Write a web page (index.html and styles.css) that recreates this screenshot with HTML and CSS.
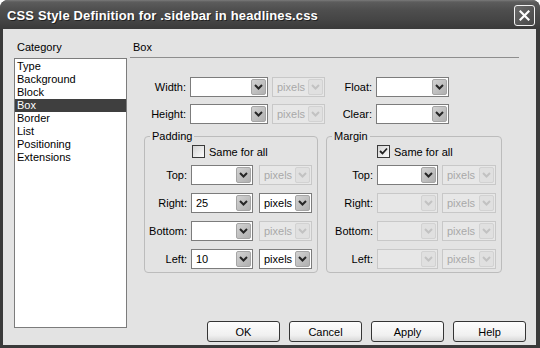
FILE: index.html
```html
<!DOCTYPE html>
<html lang="en">
<head>
    <meta charset="UTF-8">
    <title>CSS Style Definition</title>
    <link rel="stylesheet" href="styles.css">
</head>
<body>
    <div class="window">
        <div class="titlebar">
            <span class="title">CSS Style Definition for .sidebar in headlines.css</span>
            <span class="close">
                <svg width="11" height="11" viewBox="0 0 11 11"><path d="M1.5 1.5 L9.5 9.5 M9.5 1.5 L1.5 9.5" stroke="#fff" stroke-width="2.2" stroke-linecap="square"/></svg>
            </span>
        </div>

        <div class="content">
            <div class="category">
                <div class="caption">Category</div>
                <ul class="list">
                    <li>Type</li>
                    <li>Background</li>
                    <li>Block</li>
                    <li class="selected">Box</li>
                    <li>Border</li>
                    <li>List</li>
                    <li>Positioning</li>
                    <li>Extensions</li>
                </ul>
            </div>

            <div class="panel">
                <div class="heading">Box</div>

                <div class="row first">
                    <span class="lbl lbl-main">Width:</span>
                    <div class="select size"><span class="val"></span><span class="arrow"><svg width="9" height="6" viewBox="0 0 9 6"><path d="M1 1 L4.5 4.5 L8 1" fill="none" stroke-width="2"/></svg></span></div>
                    <div class="select unit disabled"><span class="val">pixels</span><span class="arrow"><svg width="9" height="6" viewBox="0 0 9 6"><path d="M1 1 L4.5 4.5 L8 1" fill="none" stroke-width="2"/></svg></span></div>
                    <span class="lbl lbl-float">Float:</span>
                    <div class="select float"><span class="val"></span><span class="arrow"><svg width="9" height="6" viewBox="0 0 9 6"><path d="M1 1 L4.5 4.5 L8 1" fill="none" stroke-width="2"/></svg></span></div>
                </div>
                <div class="row">
                    <span class="lbl lbl-main">Height:</span>
                    <div class="select size"><span class="val"></span><span class="arrow"><svg width="9" height="6" viewBox="0 0 9 6"><path d="M1 1 L4.5 4.5 L8 1" fill="none" stroke-width="2"/></svg></span></div>
                    <div class="select unit disabled"><span class="val">pixels</span><span class="arrow"><svg width="9" height="6" viewBox="0 0 9 6"><path d="M1 1 L4.5 4.5 L8 1" fill="none" stroke-width="2"/></svg></span></div>
                    <span class="lbl lbl-float">Clear:</span>
                    <div class="select float"><span class="val"></span><span class="arrow"><svg width="9" height="6" viewBox="0 0 9 6"><path d="M1 1 L4.5 4.5 L8 1" fill="none" stroke-width="2"/></svg></span></div>
                </div>

                <div class="groups">
                    <fieldset class="group padding">
                        <legend>Padding</legend>
                        <div class="check-row"><span class="check"></span>Same for all</div>
                        <div class="side">
                            <span class="lbl">Top:</span>
                            <div class="select val-box"><span class="val"></span><span class="arrow"><svg width="9" height="6" viewBox="0 0 9 6"><path d="M1 1 L4.5 4.5 L8 1" fill="none" stroke-width="2"/></svg></span></div>
                            <div class="select unit disabled"><span class="val">pixels</span><span class="arrow"><svg width="9" height="6" viewBox="0 0 9 6"><path d="M1 1 L4.5 4.5 L8 1" fill="none" stroke-width="2"/></svg></span></div>
                        </div>
                        <div class="side">
                            <span class="lbl">Right:</span>
                            <div class="select val-box"><span class="val">25</span><span class="arrow"><svg width="9" height="6" viewBox="0 0 9 6"><path d="M1 1 L4.5 4.5 L8 1" fill="none" stroke-width="2"/></svg></span></div>
                            <div class="select unit"><span class="val">pixels</span><span class="arrow"><svg width="9" height="6" viewBox="0 0 9 6"><path d="M1 1 L4.5 4.5 L8 1" fill="none" stroke-width="2"/></svg></span></div>
                        </div>
                        <div class="side">
                            <span class="lbl">Bottom:</span>
                            <div class="select val-box"><span class="val"></span><span class="arrow"><svg width="9" height="6" viewBox="0 0 9 6"><path d="M1 1 L4.5 4.5 L8 1" fill="none" stroke-width="2"/></svg></span></div>
                            <div class="select unit disabled"><span class="val">pixels</span><span class="arrow"><svg width="9" height="6" viewBox="0 0 9 6"><path d="M1 1 L4.5 4.5 L8 1" fill="none" stroke-width="2"/></svg></span></div>
                        </div>
                        <div class="side">
                            <span class="lbl">Left:</span>
                            <div class="select val-box"><span class="val">10</span><span class="arrow"><svg width="9" height="6" viewBox="0 0 9 6"><path d="M1 1 L4.5 4.5 L8 1" fill="none" stroke-width="2"/></svg></span></div>
                            <div class="select unit"><span class="val">pixels</span><span class="arrow"><svg width="9" height="6" viewBox="0 0 9 6"><path d="M1 1 L4.5 4.5 L8 1" fill="none" stroke-width="2"/></svg></span></div>
                        </div>
                    </fieldset>

                    <fieldset class="group margin">
                        <legend>Margin</legend>
                        <div class="check-row"><span class="check checked"><svg width="11" height="11" viewBox="0 0 11 11"><path d="M2 5 L4.5 7.5 L9 2.5" fill="none" stroke="#222" stroke-width="1.8"/></svg></span>Same for all</div>
                        <div class="side">
                            <span class="lbl">Top:</span>
                            <div class="select val-box"><span class="val"></span><span class="arrow"><svg width="9" height="6" viewBox="0 0 9 6"><path d="M1 1 L4.5 4.5 L8 1" fill="none" stroke-width="2"/></svg></span></div>
                            <div class="select unit disabled"><span class="val">pixels</span><span class="arrow"><svg width="9" height="6" viewBox="0 0 9 6"><path d="M1 1 L4.5 4.5 L8 1" fill="none" stroke-width="2"/></svg></span></div>
                        </div>
                        <div class="side">
                            <span class="lbl">Right:</span>
                            <div class="select val-box disabled"><span class="val"></span><span class="arrow"><svg width="9" height="6" viewBox="0 0 9 6"><path d="M1 1 L4.5 4.5 L8 1" fill="none" stroke-width="2"/></svg></span></div>
                            <div class="select unit disabled"><span class="val">pixels</span><span class="arrow"><svg width="9" height="6" viewBox="0 0 9 6"><path d="M1 1 L4.5 4.5 L8 1" fill="none" stroke-width="2"/></svg></span></div>
                        </div>
                        <div class="side">
                            <span class="lbl">Bottom:</span>
                            <div class="select val-box disabled"><span class="val"></span><span class="arrow"><svg width="9" height="6" viewBox="0 0 9 6"><path d="M1 1 L4.5 4.5 L8 1" fill="none" stroke-width="2"/></svg></span></div>
                            <div class="select unit disabled"><span class="val">pixels</span><span class="arrow"><svg width="9" height="6" viewBox="0 0 9 6"><path d="M1 1 L4.5 4.5 L8 1" fill="none" stroke-width="2"/></svg></span></div>
                        </div>
                        <div class="side">
                            <span class="lbl">Left:</span>
                            <div class="select val-box disabled"><span class="val"></span><span class="arrow"><svg width="9" height="6" viewBox="0 0 9 6"><path d="M1 1 L4.5 4.5 L8 1" fill="none" stroke-width="2"/></svg></span></div>
                            <div class="select unit disabled"><span class="val">pixels</span><span class="arrow"><svg width="9" height="6" viewBox="0 0 9 6"><path d="M1 1 L4.5 4.5 L8 1" fill="none" stroke-width="2"/></svg></span></div>
                        </div>
                    </fieldset>
                </div>

                <div class="buttons">
                    <button class="btn">OK</button>
                    <button class="btn">Cancel</button>
                    <button class="btn">Apply</button>
                    <button class="btn">Help</button>
                </div>
            </div>
        </div>
    </div>
</body>
</html>
```

FILE: styles.css
```css
:root {
    --face: #e3e3e3;
    --frame: #3a3a3a;
    --edge: #7c7c7c;
    --muted: #a9a9a9;
}

html {
    background: #fff;
}

body {
    margin: 0;
    font-family: 'Liberation Sans', Arial, sans-serif;
    font-size: 11px;
    color: #000;
}

.window {
    width: 540px;
    height: 348px;
    background: var(--frame);
    border-radius: 8px 8px 0 0;
    display: flex;
    flex-direction: column;
    overflow: hidden;
}

/* title bar */
.titlebar {
    height: 29px;
    flex: none;
    display: flex;
    align-items: center;
    justify-content: space-between;
    padding: 0 5px 0 7px;
    background: linear-gradient(#7a7a7a 0, #5c5c5c 2px, #4e4e4e 10px, #454545 20px, #3a3a3a 29px);
}

.title {
    color: #fff;
    font-weight: bold;
    font-size: 13px;
    letter-spacing: 0.15px;
    text-shadow: 1px 1px 0 #222;
    margin-top: 1px;
}

.close {
    width: 21px;
    height: 21px;
    box-sizing: border-box;
    border: 1px solid #f2f2f2;
    border-radius: 3px;
    background: linear-gradient(135deg, #6a6a6a, #474747);
    display: flex;
    align-items: center;
    justify-content: center;
    margin-top: 1px;
}

/* dialog body */
.content {
    flex: 1;
    display: flex;
    margin: 0 4px 3px 3px;
    padding: 12px 10px 3px 11px;
    background: var(--face);
    gap: 3px;
}

.category {
    width: 113px;
    flex: none;
}

.caption {
    line-height: 13px;
    margin-bottom: 4px;
    padding-left: 3px;
}

.list {
    list-style: none;
    margin: 0;
    padding: 1px 0;
    height: 270px;
    box-sizing: border-box;
    background: #fff;
    border: 1px solid var(--edge);
}

.list li {
    line-height: 13px;
    padding-left: 2px;
}

.list li.selected {
    background: #3f3f3f;
    color: #fff;
}

.panel {
    flex: 1;
    display: flex;
    flex-direction: column;
}

.heading {
    line-height: 13px;
    padding: 0 0 3px 3px;
    margin-right: 7px;
    border-bottom: 1px solid #8e8e8e;
}

.row {
    display: flex;
    align-items: center;
    height: 20px;
    margin-top: 7px;
}

.row.first {
    margin-top: 19px;
}

.lbl {
    text-align: right;
    margin-right: 4px;
    flex: none;
}

.lbl-main { width: 56px; }
.lbl-float { width: 47px; }

/* dropdowns */
.select {
    height: 20px;
    box-sizing: border-box;
    display: flex;
    padding: 1px;
    border: 1px solid var(--edge);
    background: #fff;
    flex: none;
}

.select .val {
    flex: 1;
    line-height: 16px;
    padding-left: 3px;
    white-space: nowrap;
    overflow: hidden;
}

.select .arrow {
    width: 15px;
    height: 16px;
    box-sizing: border-box;
    border: 1px solid #a5a5a5;
    border-radius: 2px;
    background: linear-gradient(135deg, #d2d2d2, #b0b0b0);
    display: flex;
    align-items: center;
    justify-content: center;
}

.select .arrow path {
    stroke: #262626;
}

.select.disabled {
    border-color: #c8c8c8;
    background: #e7e7e7;
}

.select.disabled .val {
    color: var(--muted);
}

.select.disabled .arrow {
    border-color: #d2d2d2;
    background: #e0e0e0;
}

.select.disabled .arrow path {
    stroke: #c2c2c2;
}

.size { width: 78px; }
.float { width: 73px; }
.row .unit { width: 53px; }
.row .size { margin-right: 4px; }

/* Padding / Margin groups */
.groups {
    display: flex;
    gap: 8px;
    margin-top: 6px;
    padding-left: 14px;
}

.group {
    margin: 0;
    padding: 2px 0 3px 0;
    border: 1px solid #bcbcbc;
    border-radius: 4px;
    box-sizing: border-box;
}

.group legend {
    margin-left: 5px;
    padding: 0 2px;
    line-height: 13px;
}

.group.padding { width: 174px; }
.group.margin { width: 176px; }

.check-row {
    display: flex;
    align-items: center;
    height: 13px;
    gap: 4px;
}

.padding .check-row { padding-left: 47px; }
.margin .check-row { padding-left: 50px; }

.check {
    width: 13px;
    height: 13px;
    box-sizing: border-box;
    border: 1px solid #3a3a3a;
    background: linear-gradient(135deg, #d4d4d4, #fbfbfb);
    display: flex;
    align-items: center;
    justify-content: center;
}

.side {
    display: flex;
    align-items: center;
    height: 20px;
    margin-top: 8px;
}

.side:nth-of-type(2) { margin-top: 7px; }

.padding .side .lbl { width: 42px; }
.padding .val-box { width: 62px; margin-right: 6px; }
.padding .unit { width: 53px; }

.margin .side .lbl { width: 46px; }
.margin .val-box { width: 61px; margin-right: 4px; }
.margin .unit { width: 54px; }

/* buttons */
.buttons {
    margin-top: auto;
    display: flex;
    justify-content: flex-end;
    gap: 9px;
}

.btn {
    width: 73px;
    height: 21px;
    font-family: inherit;
    font-size: 11px;
    color: #000;
    border: 1px solid #353535;
    border-radius: 3px;
    background: linear-gradient(#fdfdfd, #f0f0f0 70%, #d8d8d8);
    padding: 0;
}
```
